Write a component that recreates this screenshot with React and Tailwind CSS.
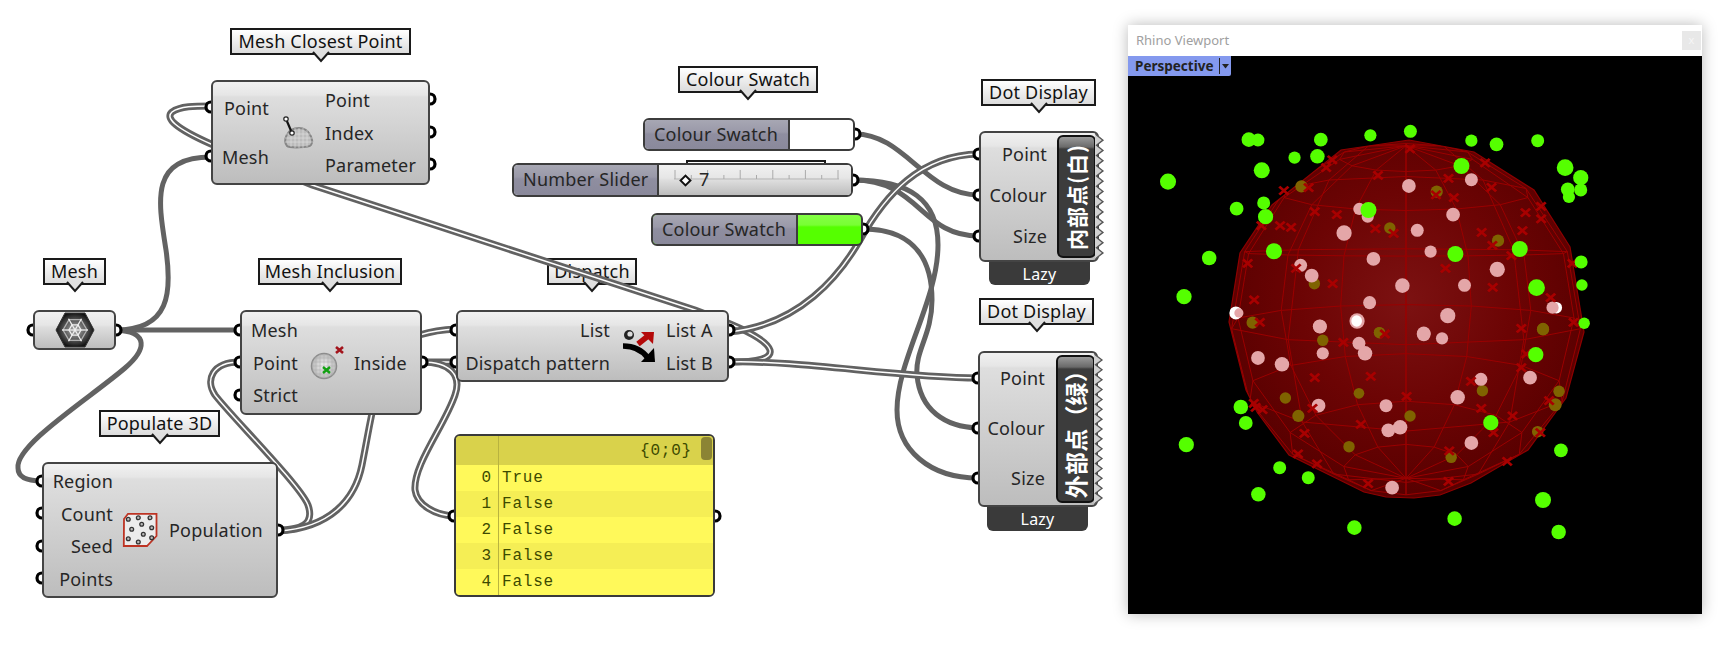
const nodeBg = 'bg-[linear-gradient(#f1f1f1_0,#e6e6e6_13px,#dedede_15px,#bdbdbd_100%)]';
const nodeBox = 'absolute rounded-[6px] border-2 border-[#444] flex items-center';
const tagBg = 'bg-[linear-gradient(#a7a7b3_0,#9a99a9_12px,#8f8ea0_14px,#8a899b_100%)]';

function Balloon({ className, label }) {
    return (
        <div className={`absolute flex items-center justify-center border-2 border-[#1a1a1a] bg-[linear-gradient(#ffffff,#dcdcdc)] text-[#111] ${className}`}>
            {label}
            <svg className="absolute top-full left-1/2 -translate-x-1/2 -mt-[2px] w-[18px] h-[13px]" viewBox="0 0 18 13">
                <polygon points="1,0 9,10 17,0" fill="#dfdfdf" />
                <polyline points="1,1 9,10 17,1" fill="none" stroke="#1a1a1a" strokeWidth="2" />
            </svg>
        </div>
    );
}

function Labels({ items, className }) {
    return (
        <div className={`flex flex-col ${className}`}>
            {items.map((t) => (
                <div key={t} className="h-6 leading-6 whitespace-nowrap">{t}</div>
            ))}
        </div>
    );
}

// double wires carry lists, thick single ones carry one item
function Wire({ d, double }) {
    return (
        <g fill="none" strokeLinecap="round">
            <path d={d} stroke="#626262" strokeWidth={double ? 7 : 5} />
            {double && <path d={d} stroke="#ffffff" strokeWidth="1.5" />}
        </g>
    );
}

const singleWires = [
    'M116 330 C170 330 172 292 166 250 C158 200 150 157 211 157',
    'M116 330 L240 330',
    'M116 330 C150 332 146 350 125 368 C90 398 15 445 18 468 C18 478 28 481 42 481',
    'M855 134 C905 134 925 195 979 195',
    'M853 180 C920 180 920 236 979 236',
    'M863 229 C905 229 932 250 932 300 C932 335 915 350 917 375 C920 410 945 427 978 428',
    'M853 180 C910 180 938 200 938 245 C938 300 897 360 897 410 C897 450 930 478 978 478',
];

const doubleWires = [
    'M729 362 C760 362 772 358 770 350 C766 338 735 325 695 310 L312 185 L211 144 C175 128 165 118 172 112 C180 106 195 106 211 106',
    'M729 332 C800 325 840 275 860 240 C885 195 920 155 979 154',
    'M729 362 C800 360 900 378 978 378',
    'M422 362 L456 362',
    'M422 362 C450 362 462 375 455 395 C445 425 413 465 415 490 C417 505 435 515 454 516',
    'M278 530 C300 530 315 525 308 505 C300 485 230 415 215 395 C205 380 212 362 240 362',
    'M278 531 C330 528 355 500 362 465 C368 435 370 420 375 400 C385 350 400 332 456 329',
];

const ports = [
    [211, 107], [211, 156], [430, 99], [430, 132], [430, 164],
    [33, 330], [116, 330],
    [240, 330], [240, 362], [240, 395], [422, 362],
    [42, 481], [42, 513], [42, 546], [42, 578], [278, 530],
    [456, 330], [456, 362], [729, 330], [729, 362],
    [454, 516], [715, 516],
    [855, 134], [853, 180], [863, 229],
    [979, 154], [979, 195], [979, 236],
    [978, 378], [978, 428], [978, 478],
];

function MeshIcon() {
    const spokes = [0, 60, 120, 180, 240, 300].map((a) => [Math.cos((a * Math.PI) / 180), Math.sin((a * Math.PI) / 180)]);
    const ring = (r) => spokes.map(([c, s]) => `${20 + c * r},${18 + s * r}`).join(' ');
    return (
        <svg className="w-10 h-9" viewBox="0 0 40 36">
            <defs>
                <radialGradient id="meshHex">
                    <stop offset="0" stopColor="#b0b0b0" />
                    <stop offset="0.6" stopColor="#555555" />
                    <stop offset="1" stopColor="#141414" />
                </radialGradient>
            </defs>
            <polygon points="1,18 10,1 30,1 39,18 30,35 10,35" fill="url(#meshHex)" stroke="#333" />
            <g fill="none" stroke="#f0f0f0" strokeWidth="1.3">
                <polygon points={ring(6)} />
                <polygon points={ring(12)} opacity="0.6" />
                {spokes.map(([c, s], i) => (
                    <line key={i} x1="20" y1="18" x2={20 + c * 13} y2={18 + s * 13} />
                ))}
            </g>
        </svg>
    );
}

function ClosestIcon() {
    return (
        <svg className="w-[34px] h-9 ml-[3px]" viewBox="283 115 34 36">
            <path d="M288 146 C284 141 287 128 300 128 C311 128 315 141 312 145 C310 148 290 148 288 146Z" fill="#bcbcbc" stroke="#868686" strokeWidth="2" />
            <g stroke="#e2e2e2" strokeWidth="0.6">
                <path d="M292 130 V147 M296 128 V148 M300 128 V148 M304 128 V148 M308 130 V147 M287 134 H313 M286 138 H314 M286 142 H314" />
            </g>
            <line x1="287" y1="119" x2="293" y2="133" stroke="#111" strokeWidth="2.2" />
            <circle cx="287" cy="119" r="2.2" fill="#fff" stroke="#222" strokeWidth="1.2" />
            <circle cx="293" cy="133" r="2.2" fill="#fff" stroke="#222" strokeWidth="1.2" />
        </svg>
    );
}

function InclusionIcon() {
    return (
        <svg className="w-9 h-9" viewBox="306 344 36 36">
            <defs>
                <radialGradient id="inclBall">
                    <stop offset="0" stopColor="#f2f2f2" />
                    <stop offset="1" stopColor="#b8b8b8" />
                </radialGradient>
            </defs>
            <circle cx="322" cy="365" r="12.5" fill="url(#inclBall)" stroke="#8c8c8c" strokeWidth="1.5" />
            <path d="M314 355 V375 M318 353 V377 M322 353 V377 M326 353 V377 M330 355 V375 M311 357 H333 M310 361 H334 M310 365 H334 M310 369 H334 M311 373 H333" stroke="#aaa" strokeWidth="0.5" />
            <path d="M321 366 L328 372 M328 366 L321 372" stroke="#12a012" strokeWidth="2.4" />
            <path d="M334 346 L341 352 M341 346 L334 352" stroke="#a3141c" strokeWidth="2.6" />
        </svg>
    );
}

function PopulateIcon() {
    const dots = [[5.3, 6.3], [15.3, 4.7], [27, 4.7], [18.7, 11.3], [8.7, 16.3], [28.7, 14.7], [20.3, 21.3], [5.3, 25.7], [15.3, 29], [28.7, 24.7]];
    return (
        <svg className="w-[36px] h-[36px] ml-[9px]" viewBox="-1 -1 36 36">
            <polygon points="1,6 5,0.8 33.5,0.8 33.5,23 24,33 0.8,33" fill="#ececec" stroke="#bd3323" strokeWidth="1.8" />
            {dots.map(([x, y]) => (
                <circle key={`${x}-${y}`} cx={x} cy={y} r="1.9" fill="#bbb" stroke="#333" strokeWidth="1.3" />
            ))}
        </svg>
    );
}

function DispatchIcon() {
    return (
        <svg className="w-9 h-[38px]" viewBox="618 326 36 38">
            <path d="M636 343 L646 335" stroke="#b40a0a" strokeWidth="5.5" />
            <polygon points="639,331 652,331 651,343" fill="#b40a0a" />
            <circle cx="627" cy="334" r="5" fill="#222" />
            <circle cx="628" cy="333" r="2.6" fill="#ddd" />
            <path d="M621 345 C632 345 640 349 646 357" fill="none" stroke="#000" strokeWidth="5.5" />
            <polygon points="639,361 653,361 652,347" fill="#000" />
        </svg>
    );
}

function Zigzag({ className, height }) {
    const pts = [];
    const teeth = Math.round((height - 8) / 10.2);
    const step = (height - 8) / teeth;
    for (let i = 0; i <= teeth; i++) {
        pts.push(`1.5,${4 + i * step}`);
        if (i < teeth) pts.push(`8,${4 + i * step + step / 2}`);
    }
    return (
        <svg className={`absolute -right-[8px] -top-[2px] w-[10px] ${className}`} viewBox={`0 0 10 ${height}`}>
            <polyline points={`0,2 ${pts.join(' ')} 0,${height - 2}`} fill="#d2d2d2" stroke="#555" strokeWidth="1.3" />
        </svg>
    );
}

function DarkTag({ textClass, label }) {
    return (
        <div className="ml-auto mr-[1px] my-[2px] w-[39px] self-stretch rounded-[6px] border-2 border-[#111] bg-[linear-gradient(#9a9a9a_0,#6a6a6a_10px,#3c3c3c_12px,#3c3c3c_100%)] flex items-center justify-center overflow-hidden">
            <span className={`[writing-mode:vertical-rl] [text-orientation:sideways] rotate-180 font-bold text-white whitespace-nowrap font-['Noto_Sans_CJK_SC',sans-serif] ${textClass}`}>{label}</span>
        </div>
    );
}

function LazyBar({ className }) {
    return (
        <div className={`absolute rounded-b-[6px] bg-[#3a3a3a] text-white flex items-center justify-center text-[16px] ${className}`}>Lazy</div>
    );
}

function Panel() {
    const rows = ['True', 'False', 'False', 'False', 'False'];
    return (
        <div className="absolute left-[454px] top-[434px] w-[261px] h-[163px] rounded-[6px] border-2 border-[#3a3a3a] overflow-hidden font-['Liberation_Mono',monospace] text-[16px] tracking-[0.8px] text-[#3d4a00] bg-[#fff95a]">
            <div className="relative h-[29px] bg-[#d9d24b] flex items-center justify-end pr-[21px]">
                <span>{'{0;0}'}</span>
                <div className="absolute right-[1px] top-[1px] w-[11px] h-[23px] rounded-[4px] bg-[#8b8434]" />
            </div>
            {rows.map((text, i) => (
                <div key={i} className={`flex items-center h-[26px] ${i % 2 ? 'bg-[#f5ee55]' : 'bg-[#fff95a]'}`}>
                    <div className="w-[41px] pr-[5px] text-right">{i}</div>
                    <div className="pl-[5px]">{text}</div>
                </div>
            ))}
            <div className="absolute left-[42px] top-0 bottom-0 w-[1px] bg-[#b9b33f]" />
        </div>
    );
}

function SliderTicks() {
    const ticks = [];
    for (let i = 0; i <= 10; i++) {
        ticks.push(<line key={i} x1={1 + i * 16.3} x2={1 + i * 16.3} y1={i % 2 ? 5 : 0} y2="9" stroke="#aaa" strokeWidth="1" />);
    }
    return (
        <svg className="absolute left-[15px] top-[5px] w-[166px] h-[10px]" viewBox="0 0 166 10">
            <line x1="0" y1="9" x2="165" y2="9" stroke="#b5b5b5" strokeWidth="1" />
            {ticks}
        </svg>
    );
}

// sphere wireframe, low poly with a small tilt and some perspective
function project(lat, lon) {
    const t = 0.107;
    const a = (lat * Math.PI) / 180;
    const b = (lon * Math.PI) / 180;
    const x = Math.cos(a) * Math.sin(b);
    const y = Math.sin(a);
    const z = Math.cos(a) * Math.cos(b);
    const y2 = y * Math.cos(t) - z * Math.sin(t);
    const z2 = y * Math.sin(t) + z * Math.cos(t);
    const s = 3 / (3 - z2);
    return `${(1406 + 168 * x * s).toFixed(1)},${(318 - 167 * y2 * s).toFixed(1)}`;
}

const lons = Array.from({ length: 13 }, (_, i) => i * 30);
const lats = [-90, -67.5, -45, -22.5, 0, 22.5, 45, 67.5, 90];
const sphereLines = [
    ...[-67.5, -45, -22.5, 0, 22.5, 45, 67.5].map((lat) => lons.map((lon) => project(lat, lon)).join(' ')),
    ...lons.slice(0, 12).map((lon) => lats.map((lat) => project(lat, lon)).join(' ')),
];

const hull = '1409,140 1474,152 1534,190 1570,247 1584,332 1566,398 1528,450 1471,483 1440,495 1414,498 1386,497 1364,492 1289,455 1257,412 1246,390 1229,322 1240,253 1272,205 1306,178 1341,150';

// dot data read off the two zoom crops (2.624x wide, 3x tall)
const upper = {
    green: [[338, 374, 19], [362, 375, 17], [527, 374, 18], [657, 361, 16], [762, 349, 17], [922, 377, 16], [988, 388, 18], [1096, 377, 17], [458, 428, 16], [518, 424, 19], [372, 466, 21], [126, 500, 21], [896, 453, 21], [1168, 458, 22], [1209, 488, 20], [1175, 523, 18], [1209, 525, 17], [1178, 546, 16], [306, 581, 18], [377, 564, 17], [382, 605, 20], [652, 585, 21], [404, 709, 21], [234, 729, 19], [880, 717, 21], [1049, 702, 21], [1210, 741, 17], [1212, 810, 15], [1093, 818, 22], [168, 845, 20], [1218, 925, 15]],
    white: [[304, 894, 17], [1145, 878, 15], [622, 918, 15]],
    pink: [[758, 513, 18], [922, 494, 17], [628, 582, 16], [650, 605, 16], [874, 599, 18], [588, 654, 20], [780, 646, 17], [665, 732, 18], [815, 710, 16], [474, 751, 17], [503, 782, 18], [990, 763, 20], [741, 812, 19], [904, 811, 17], [655, 863, 17], [860, 902, 20], [524, 934, 18], [1135, 878, 16], [312, 894, 12], [797, 955, 18]],
    olive: [[476, 514, 16], [831, 530, 16], [708, 639, 15], [992, 677, 16], [510, 806, 15], [348, 923, 16], [680, 952, 14], [1110, 942, 16]],
    cross: [[761, 402], [557, 435], [541, 458], [958, 444], [677, 481], [862, 490], [430, 527], [495, 518], [975, 517], [876, 548], [829, 540], [1105, 574], [511, 590], [569, 599], [1064, 593], [1105, 612], [420, 632], [449, 637], [371, 632], [670, 641], [718, 655], [949, 652], [1056, 647], [977, 691], [1027, 722], [335, 745], [854, 760], [462, 760], [1187, 745], [558, 806], [978, 817], [352, 855], [1130, 848], [367, 922], [1053, 940], [1190, 922]],
};

const lower = {
    green: [[1091, 104, 20], [973, 308, 20], [317, 261, 19], [330, 309, 18], [174, 374, 20], [1157, 391, 18], [419, 443, 17], [494, 473, 17], [363, 523, 19], [1110, 540, 21], [615, 623, 19], [878, 596, 19], [1151, 636, 19]],
    white: [],
    pink: [[525, 20, 18], [797, 43, 18], [845, 55, 16], [627, 70, 17], [643, 100, 19], [532, 100, 16], [362, 114, 18], [425, 133, 19], [947, 178, 17], [1076, 173, 18], [886, 232, 19], [521, 257, 18], [698, 257, 17], [735, 322, 19], [704, 331, 18], [922, 369, 18], [714, 503, 18]],
    olive: [[532, 61, 15], [681, 38, 15], [1110, 28, 16], [951, 212, 15], [434, 234, 15], [627, 220, 14], [1152, 214, 15], [1142, 254, 17], [468, 288, 16], [761, 288, 15], [601, 380, 15], [1096, 335, 15], [869, 412, 15]],
    cross: [[586, 67], [695, 42], [1066, 102], [1053, 143], [511, 173], [658, 169], [921, 184], [752, 229], [351, 250], [356, 262], [374, 269], [948, 265], [1126, 242], [1030, 288], [632, 313], [980, 338], [1103, 338], [484, 340], [864, 393], [467, 402], [517, 432], [1016, 424], [651, 491], [862, 484], [505, 265]],
};

function Dots({ data, color, stretch = 1.15 }) {
    return data.map(([x, y, r]) => (
        <ellipse key={`${x}-${y}`} cx={x} cy={y} rx={r} ry={r * stretch} fill={color} />
    ));
}

function Crosses({ data }) {
    return data.map(([x, y]) => (
        <path key={`${x}-${y}`} d={`M${x - 12} ${y - 12} L${x + 12} ${y + 12} M${x + 12} ${y - 12} L${x - 12} ${y + 12}`} stroke="#a80000" strokeWidth="7.5" />
    ));
}

function SphereView() {
    return (
        <svg className="w-[574px] h-[558px] block" viewBox="1128 56 574 558">
            <defs>
                <radialGradient id="ball" gradientUnits="userSpaceOnUse" cx="1406" cy="300" r="195">
                    <stop offset="0" stopColor="#7c1212" />
                    <stop offset="0.55" stopColor="#6c0404" />
                    <stop offset="1" stopColor="#580000" />
                </radialGradient>
                <clipPath id="hullClip">
                    <polygon points={hull} />
                </clipPath>
            </defs>
            <polygon points={hull} fill="url(#ball)" stroke="#8e0000" strokeWidth="1.2" />
            <g clipPath="url(#hullClip)" fill="none" stroke="#9a0000" strokeWidth="1">
                {sphereLines.map((pts, i) => (
                    <polyline key={i} points={pts} />
                ))}
            </g>
            <g transform="translate(1120 15) scale(0.3811 0.3333)">
                <Dots data={upper.white} color="#ffffff" />
                <Dots data={upper.olive} color="#7f6300" />
                <Dots data={upper.pink} color="#e4a6a8" />
                <ellipse cx="622" cy="918" rx="20" ry="23" fill="#e4a6a8" />
                <ellipse cx="621" cy="918" rx="14" ry="17" fill="#ffffff" />
                <Crosses data={upper.cross} />
                <Dots data={upper.green} color="#55ff00" />
            </g>
            <g transform="translate(1120 320) scale(0.3811 0.3333)">
                <Dots data={lower.olive} color="#7f6300" />
                <Dots data={lower.pink} color="#e4a6a8" />
                <Crosses data={lower.cross} />
                <Dots data={lower.green} color="#55ff00" />
            </g>
        </svg>
    );
}

export default function App() {
    return (
        <div className="relative w-[1719px] h-[648px] bg-white overflow-hidden text-[18px] tracking-[0.2px] text-[#262626] font-['Noto_Sans','Noto_Sans_CJK_SC',sans-serif]">
            <Balloon className="left-[230px] top-[28px] w-[181px] h-[27px]" label="Mesh Closest Point" />
            <Balloon className="left-[43px] top-[258px] w-[63px] h-[27px]" label="Mesh" />
            <Balloon className="left-[258px] top-[258px] w-[144px] h-[27px]" label="Mesh Inclusion" />
            <Balloon className="left-[99px] top-[410px] w-[121px] h-[27px]" label="Populate 3D" />
            <Balloon className="left-[547px] top-[258px] w-[90px] h-[27px]" label="Dispatch" />
            <Balloon className="left-[678px] top-[66px] w-[140px] h-[27px]" label="Colour Swatch" />
            <div className="absolute left-[686px] top-[160px] w-[140px] h-[10px] border-2 border-[#1a1a1a] bg-white" />
            <Balloon className="left-[981px] top-[79px] w-[115px] h-[27px]" label="Dot Display" />
            <Balloon className="left-[979px] top-[298px] w-[115px] h-[27px]" label="Dot Display" />

            <svg className="absolute inset-0 w-[1719px] h-[648px]" viewBox="0 0 1719 648">
                {singleWires.map((d) => <Wire key={d} d={d} />)}
                {doubleWires.map((d) => <Wire key={d} d={d} double />)}
                {ports.map(([x, y]) => (
                    <circle key={`${x}-${y}`} cx={x} cy={y} r="5" fill="#fff" stroke="#000" strokeWidth="3.2" />
                ))}
            </svg>

            <div className={`${nodeBox} ${nodeBg} left-[211px] top-[80px] w-[219px] h-[105px]`}>
                <Labels items={['Point', 'Mesh']} className="w-[56px] items-end gap-[25px]" />
                <div className="w-[56px] flex justify-center"><ClosestIcon /></div>
                <Labels items={['Point', 'Index', 'Parameter']} className="gap-[8.5px]" />
            </div>

            <div className={`${nodeBox} ${nodeBg} justify-center left-[33px] top-[310px] w-[83px] h-[40px]`}>
                <MeshIcon />
            </div>

            <div className={`${nodeBox} ${nodeBg} left-[240px] top-[310px] w-[182px] h-[105px]`}>
                <Labels items={['Mesh', 'Point', 'Strict']} className="w-[56px] items-end gap-[8.5px]" />
                <div className="w-[56px] flex justify-center"><InclusionIcon /></div>
                <Labels items={['Inside']} />
            </div>

            <div className={`${nodeBox} ${nodeBg} left-[42px] top-[462px] w-[236px] h-[136px]`}>
                <Labels items={['Region', 'Count', 'Seed', 'Points']} className="w-[69px] items-end gap-[8.5px]" />
                <div className="w-[56px]"><PopulateIcon /></div>
                <Labels items={['Population']} />
            </div>

            <div className={`${nodeBox} ${nodeBg} left-[456px] top-[310px] w-[273px] h-[72px]`}>
                <Labels items={['List', 'Dispatch pattern']} className="w-[152px] items-end gap-[9px]" />
                <div className="w-[56px] flex justify-center"><DispatchIcon /></div>
                <Labels items={['List A', 'List B']} className="gap-[9px]" />
            </div>

            <Panel />

            <div className="absolute left-[643px] top-[118px] w-[212px] h-[33px] rounded-[6px] border-2 border-[#3c3c3c] flex overflow-hidden bg-white">
                <div className={`${tagBg} w-[145px] border-r-2 border-[#3c3c3c] pl-[9px] leading-[28px]`}>Colour Swatch</div>
            </div>

            <div className="absolute left-[512px] top-[163px] w-[341px] h-[34px] rounded-[6px] border-2 border-[#3c3c3c] flex overflow-hidden">
                <div className={`${tagBg} w-[145px] border-r-2 border-[#3c3c3c] pl-[9px] leading-[28px]`}>Number Slider</div>
                <div className={`${nodeBg} relative flex-1`}>
                    <SliderTicks />
                    <div className="absolute left-[22px] top-[11px] w-[9px] h-[9px] rotate-45 border-2 border-[#111] bg-white" />
                    <span className="absolute left-[40px] top-0 leading-[28px]">7</span>
                </div>
            </div>

            <div className="absolute left-[651px] top-[213px] w-[212px] h-[33px] rounded-[6px] border-2 border-[#3c3c3c] flex overflow-hidden bg-[linear-gradient(#84ff44_0,#78ff33_10px,#55ff00_12px,#55ff00_100%)]">
                <div className={`${tagBg} w-[145px] border-r-2 border-[#3c3c3c] pl-[9px] leading-[28px]`}>Colour Swatch</div>
            </div>

            <LazyBar className="left-[989px] top-[262px] w-[101px] h-[23px]" />
            <div className={`${nodeBox} ${nodeBg} left-[979px] top-[131px] w-[120px] h-[131px]`}>
                <Labels items={['Point', 'Colour', 'Size']} className="w-[66px] items-end gap-[17px] pb-[3px]" />
                <Zigzag className="h-[131px]" height={131} />
                <DarkTag textClass="text-[21px] tracking-[1px]" label="内部点(白)" />
            </div>

            <LazyBar className="left-[987px] top-[507px] w-[101px] h-[24px]" />
            <div className={`${nodeBox} ${nodeBg} left-[978px] top-[351px] w-[120px] h-[156px]`}>
                <Labels items={['Point', 'Colour', 'Size']} className="w-[65px] items-end gap-[26px] pb-[2px]" />
                <Zigzag className="h-[156px]" height={156} />
                <DarkTag textClass="text-[23px]" label="外部点（绿）" />
            </div>

            <div className="absolute left-[1128px] top-[25px] w-[574px] h-[589px] bg-white shadow-[0_0_14px_rgba(0,0,0,0.28)] tracking-normal">
                <div className="h-[31px] flex items-center pl-[8px] text-[13px] text-[#a0a0a0]">
                    Rhino Viewport
                    <div className="ml-auto mr-[1px] w-[19px] h-[19px] bg-[#e8e8e8] flex items-center justify-center text-[11px] text-[#f6f6f6]">x</div>
                </div>
                <div className="relative bg-black h-[558px]">
                    <SphereView />
                    <div className="absolute left-0 top-0 w-[103px] h-[20px] bg-[#8499ee] rounded-br-[2px] flex items-center text-[13.5px] font-bold text-[#222] pl-[7px]">
                        Perspective
                        <div className="ml-auto h-[16px] w-[1px] bg-[#222]" />
                        <svg className="mx-[2px] w-[7px] h-[5px]" viewBox="0 0 7 5">
                            <polygon points="0,0 7,0 3.5,4.5" fill="#222" />
                        </svg>
                    </div>
                </div>
            </div>
        </div>
    );
}
